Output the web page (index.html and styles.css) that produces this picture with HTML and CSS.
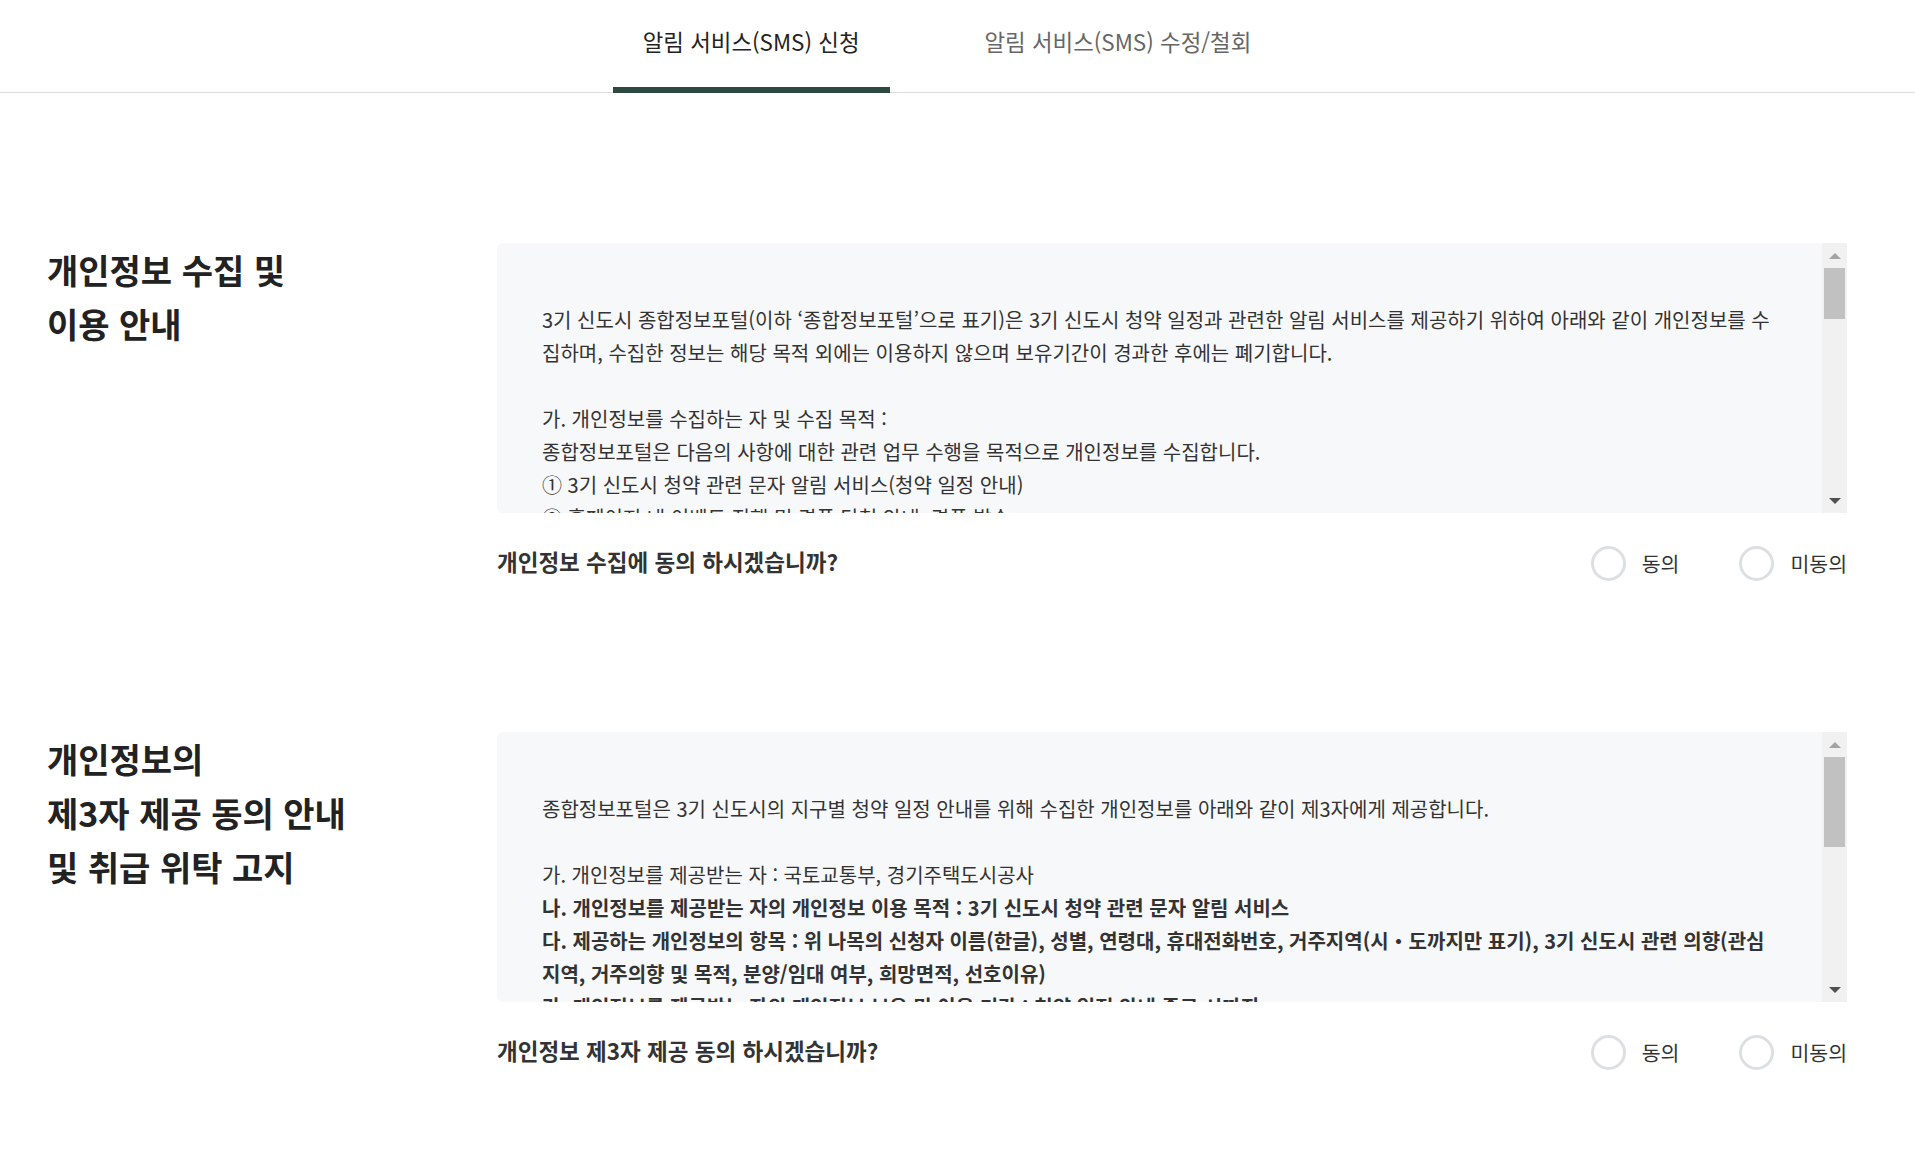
FILE: index.html
```html
<!DOCTYPE html>
<html lang="ko">
<head>
<meta charset="utf-8">
<title>알림 서비스(SMS) 신청</title>
<link rel="stylesheet" href="styles.css">
</head>
<body>
<nav class="tabbar">
  <ul class="tabs">
    <li class="tab active">알림 서비스(SMS) 신청</li>
    <li class="tab">알림 서비스(SMS) 수정/철회</li>
  </ul>
</nav>
<main class="main">
  <div class="container">
    <section class="section">
      <h2 class="sec-title">개인정보 수집 및<br>이용 안내</h2>
      <div class="sec-body">
        <div class="terms">
          <div class="terms-text">
            <p class="group">3기 신도시 종합정보포털(이하 ‘종합정보포털’으로 표기)은 3기 신도시 청약 일정과 관련한 알림 서비스를 제공하기 위하여 아래와 같이 개인정보를 수집하며, 수집한 정보는 해당 목적 외에는 이용하지 않으며 보유기간이 경과한 후에는 폐기합니다.</p>
            <div class="group">
              <p>가. 개인정보를 수집하는 자 및 수집 목적 :</p>
              <p>종합정보포털은 다음의 사항에 대한 관련 업무 수행을 목적으로 개인정보를 수집합니다.</p>
              <p>① 3기 신도시 청약 관련 문자 알림 서비스(청약 일정 안내)</p>
              <p>② 홈페이지 내 이벤트 진행 및 경품 당첨 안내, 경품 발송</p>
              <p>③ 3기 신도시 관련 의향 조사 및 통계 분석</p>
            </div>
            <div class="group">
              <p>나. 수집하는 개인정보의 항목 :</p>
              <p>필수항목 : 이름(한글), 휴대전화번호, 성별, 연령대, 거주지역(시・도까지만 표기)</p>
              <p>선택항목 : 3기 신도시 관련 의향(관심지역, 거주의향 및 목적, 분양/임대 여부, 희망면적, 선호이유)</p>
            </div>
            <div class="group">
              <p>다. 개인정보의 보유 및 이용 기간 :</p>
              <p>수집한 개인정보는 3기 신도시 청약 일정 종료 시까지 보유·이용하며, 이용자가 알림 서비스 철회를 요청하는 경우 지체 없이 파기합니다.</p>
            </div>
          </div>
          <div class="scrollbar" aria-hidden="true">
            <span class="sb-btn">
              <svg width="12" height="6" viewBox="0 0 12 6"><polygon points="6,0 12,6 0,6" fill="#a3a3a3"/></svg>
            </span>
            <span class="sb-track"><span class="sb-thumb" style="height:51px"></span></span>
            <span class="sb-btn">
              <svg width="12" height="6" viewBox="0 0 12 6"><polygon points="0,0 12,0 6,6" fill="#505050"/></svg>
            </span>
          </div>
        </div>
        <div class="consent">
          <p class="question">개인정보 수집에 동의 하시겠습니까?</p>
          <div class="choices">
            <label class="choice"><span class="radio"></span>동의</label>
            <label class="choice"><span class="radio"></span>미동의</label>
          </div>
        </div>
      </div>
    </section>

    <section class="section">
      <h2 class="sec-title">개인정보의<br>제3자 제공 동의 안내<br>및 취급 위탁 고지</h2>
      <div class="sec-body">
        <div class="terms">
          <div class="terms-text">
            <p class="group">종합정보포털은 3기 신도시의 지구별 청약 일정 안내를 위해 수집한 개인정보를 아래와 같이 제3자에게 제공합니다.</p>
            <div class="group">
              <p>가. 개인정보를 제공받는 자 : 국토교통부, 경기주택도시공사</p>
              <p class="strong">나. 개인정보를 제공받는 자의 개인정보 이용 목적 : 3기 신도시 청약 관련 문자 알림 서비스</p>
              <p class="strong">다. 제공하는 개인정보의 항목 : 위 나목의 신청자 이름(한글), 성별, 연령대, 휴대전화번호, 거주지역(시・도까지만 표기), 3기 신도시 관련 의향(관심지역, 거주의향 및 목적, 분양/임대 여부, 희망면적, 선호이유)</p>
              <p class="strong">라. 개인정보를 제공받는 자의 개인정보 보유 및 이용 기간 : 청약 일정 안내 종료 시까지</p>
            </div>
          </div>
          <div class="scrollbar" aria-hidden="true">
            <span class="sb-btn">
              <svg width="12" height="6" viewBox="0 0 12 6"><polygon points="6,0 12,6 0,6" fill="#a3a3a3"/></svg>
            </span>
            <span class="sb-track"><span class="sb-thumb" style="height:90px"></span></span>
            <span class="sb-btn">
              <svg width="12" height="6" viewBox="0 0 12 6"><polygon points="0,0 12,0 6,6" fill="#505050"/></svg>
            </span>
          </div>
        </div>
        <div class="consent">
          <p class="question">개인정보 제3자 제공 동의 하시겠습니까?</p>
          <div class="choices">
            <label class="choice"><span class="radio"></span>동의</label>
            <label class="choice"><span class="radio"></span>미동의</label>
          </div>
        </div>
      </div>
    </section>
  </div>
</main>
</body>
</html>
```

FILE: styles.css
```css
* { box-sizing: border-box; }
html, body { margin: 0; padding: 0; background: #fff; }
body {
  font-family: "Noto Sans CJK KR", "Noto Sans", sans-serif;
  color: #333;
}
p { margin: 0; }

.tabbar {
  border-bottom: 1px solid #dddddd;
  padding-right: 21px;
}
.tabs {
  list-style: none;
  margin: 0;
  padding: 0;
  display: flex;
  justify-content: center;
  gap: 65px;
}
.tab {
  position: relative;
  height: 92px;
  padding: 0 30px 10px;
  display: flex;
  align-items: center;
  font-size: 22.4px;
  color: #666;
  white-space: nowrap;
}
.tab.active { color: #222; }
.tab.active::after {
  content: "";
  position: absolute;
  left: 0;
  right: 0;
  bottom: -1px;
  height: 6px;
  background: #2e4a3f;
}

.main { padding-right: 21px; padding-bottom: 60px; }
.container { width: 1800px; margin: 0 auto; }

.section {
  display: grid;
  grid-template-columns: 450px 1350px;
  padding-top: 150px;
}
.section + .section { padding-top: 149px; }
.sec-title {
  margin: 0;
  font-size: 34px;
  line-height: 54px;
  font-weight: 700;
  color: #222;
}

.terms {
  height: 270px;
  display: flex;
  background: #f7f8fa;
  border-radius: 6px 0 0 6px;
}
.terms-text {
  flex: 1;
  min-width: 0;
  overflow: hidden;
  padding: 60px 42px 0 45px;
  font-size: 20px;
  line-height: 33px;
  color: #333;
}
.terms-text .group { margin-bottom: 33px; }
.terms-text .strong { font-weight: 700; }

.scrollbar {
  width: 25px;
  flex: none;
  display: flex;
  flex-direction: column;
  background: #f1f1f1;
}
.sb-btn {
  height: 25px;
  flex: none;
  display: flex;
  align-items: center;
  justify-content: center;
}
.sb-track {
  flex: 1;
  padding: 0 2px;
}
.sb-thumb {
  display: block;
  background: #c1c1c1;
}

.consent {
  margin-top: 30px;
  height: 40px;
  display: flex;
  align-items: center;
  justify-content: space-between;
}
.question {
  font-size: 22.5px;
  font-weight: 700;
  color: #333;
  margin-bottom: 5px;
}
.choices { display: flex; gap: 60px; }
.choice {
  display: flex;
  align-items: center;
  gap: 16px;
  font-size: 20.5px;
  color: #333;
}
.radio {
  width: 35px;
  height: 35px;
  border: 3px solid #dcdfe3;
  border-radius: 50%;
  background: #fff;
}
```
